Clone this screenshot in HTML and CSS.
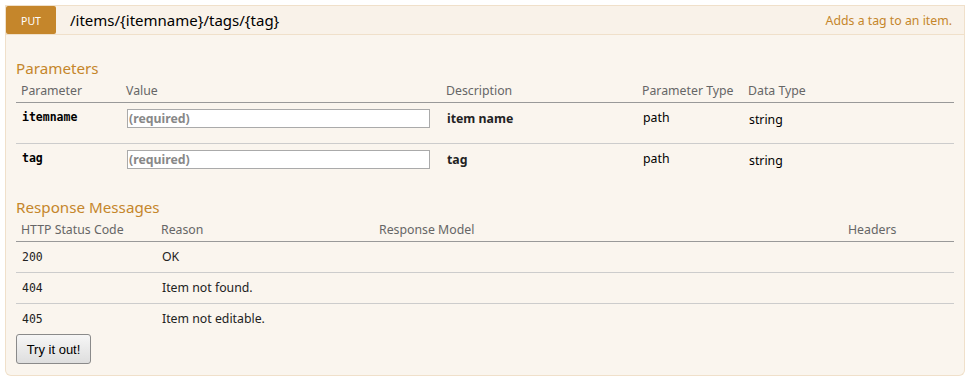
FILE: index.html
```html
<!DOCTYPE html>
<html lang="en">
<head>
  <meta charset="UTF-8" />
  <title>PUT /items/{itemname}/tags/{tag}</title>
  <link rel="stylesheet" href="styles.css">
</head>
<body>
  <div class="operation put">
    <div class="heading">
      <span class="http-method">PUT</span>
      <span class="path">/items/{itemname}/tags/{tag}</span>
      <span class="summary">Adds a tag to an item.</span>
    </div>

    <div class="content">
      <h4>Parameters</h4>
      <table class="params">
        <colgroup>
          <col style="width: 105px">
          <col style="width: 320px">
          <col style="width: 196px">
          <col style="width: 106px">
          <col>
        </colgroup>
        <thead>
          <tr>
            <th>Parameter</th>
            <th>Value</th>
            <th>Description</th>
            <th>Parameter Type</th>
            <th>Data Type</th>
          </tr>
        </thead>
        <tbody>
          <tr>
            <td class="code">itemname</td>
            <td><input class="parameter required" type="text" placeholder="(required)"></td>
            <td class="markdown">item name</td>
            <td class="ptype">path</td>
            <td class="dtype">string</td>
          </tr>
          <tr>
            <td class="code">tag</td>
            <td><input class="parameter required" type="text" placeholder="(required)"></td>
            <td class="markdown">tag</td>
            <td class="ptype">path</td>
            <td class="dtype">string</td>
          </tr>
        </tbody>
      </table>

      <h4>Response Messages</h4>
      <table class="responses">
        <colgroup>
          <col style="width: 140px">
          <col style="width: 218px">
          <col style="width: 469px">
          <col>
        </colgroup>
        <thead>
          <tr>
            <th>HTTP Status Code</th>
            <th>Reason</th>
            <th>Response Model</th>
            <th>Headers</th>
          </tr>
        </thead>
        <tbody>
          <tr>
            <td class="code">200</td>
            <td>OK</td>
            <td></td>
            <td></td>
          </tr>
          <tr>
            <td class="code">404</td>
            <td>Item not found.</td>
            <td></td>
            <td></td>
          </tr>
          <tr>
            <td class="code">405</td>
            <td>Item not editable.</td>
            <td></td>
            <td></td>
          </tr>
        </tbody>
      </table>

      <button class="submit" type="button">Try it out!</button>
    </div>
  </div>
</body>
</html>
```

FILE: styles.css
```css
html, body {
  margin: 0;
  padding: 0;
  background: #fff;
  font-family: 'Noto Sans', 'Open Sans', sans-serif;
  color: #333;
}

.operation {
  margin: 5px 6px 0 5px;
}

.heading {
  display: flex;
  align-items: center;
  height: 28px;
  padding-right: 12px;
  background: #f9f2e9;
  border: 1px solid #f0e0ca;
}

.http-method {
  width: 50px;
  height: 28px;
  line-height: 30px;
  text-align: center;
  font-size: 10.5px;
  color: #fff;
  background: #c5862b;
  border-radius: 2px;
}

.path {
  margin-left: 14px;
  font-size: 15px;
  color: #000;
}

.summary {
  margin-left: auto;
  font-size: 12.3px;
  color: #c5862b;
}

.content {
  padding: 10px 10px 11px;
  background: #faf5ee;
  border: 1px solid #f0e0ca;
  border-top: none;
  border-radius: 0 0 6px 6px;
}

h4 {
  margin: 13px 0 0;
  font-size: 15.2px;
  line-height: 20px;
  font-weight: normal;
  color: #c5862b;
}

table {
  width: 100%;
  border-collapse: collapse;
  table-layout: fixed;
}

th {
  padding: 4px 5px 3px;
  font-size: 12.3px;
  line-height: 17px;
  font-weight: normal;
  text-align: left;
  white-space: nowrap;
  color: #666;
  border-bottom: 1px solid #999;
}

td {
  padding: 6px;
  font-size: 12.3px;
  line-height: 18px;
  vertical-align: top;
  color: #222;
  border-bottom: 1px solid #ccc;
}

tbody tr:last-child td {
  border-bottom: none;
}

td.code {
  font-family: 'DejaVu Sans Mono', 'Liberation Mono', monospace;
  font-size: 11.5px;
}

.params td {
  padding-bottom: 15px;
  line-height: 19px;
}

.params td.code {
  line-height: 17px;
  font-weight: bold;
  color: #000;
}

.params td.markdown {
  font-weight: bold;
}

.params td.ptype {
  line-height: 17px;
  color: #000;
}

.params td.dtype {
  padding-top: 7px;
  padding-bottom: 14px;
  color: #000;
}

input.parameter {
  display: block;
  box-sizing: border-box;
  width: 303px;
  height: 19px;
  margin: 0;
  padding: 0 1px;
  font-family: 'Noto Sans', sans-serif;
  font-size: 12.3px;
  background: #fff;
  border: 1px solid #aaa;
}

input.required::placeholder {
  font-weight: bold;
  color: #888;
}

.submit {
  display: block;
  width: 75px;
  height: 30px;
  padding: 0;
  font-family: 'Liberation Sans', Arial, sans-serif;
  font-size: 13px;
  color: #000;
  background: linear-gradient(#f6f6f6, #dedede);
  border: 1px solid #8a8a8a;
  border-radius: 3px;
}
```
